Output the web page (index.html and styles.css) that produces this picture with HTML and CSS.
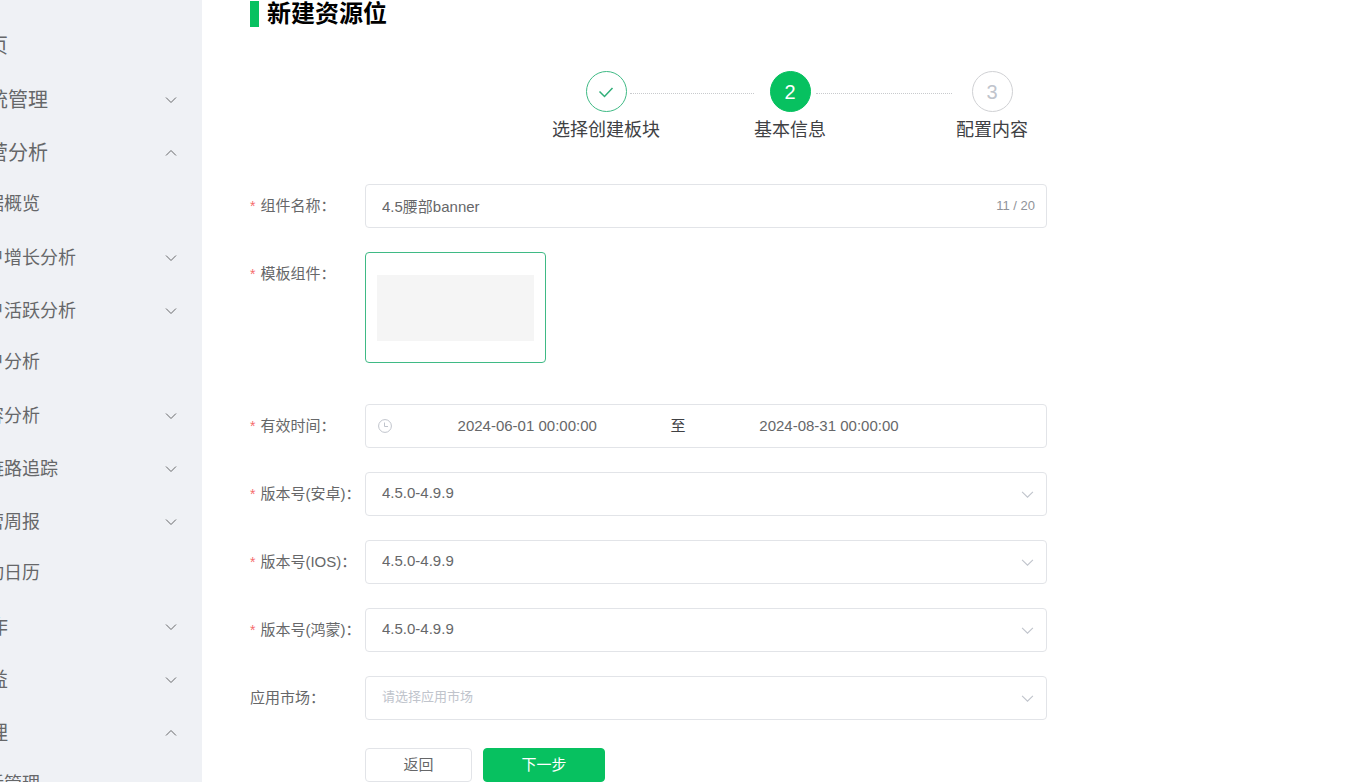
FILE: index.html
```html
<!DOCTYPE html>
<html lang="zh-CN">
<head>
<meta charset="utf-8">
<title>新建资源位</title>
<link rel="stylesheet" href="styles.css">
</head>
<body>
<svg class="sprite" aria-hidden="true">
  <symbol id="down" viewBox="0 0 12 12"><path d="M1 3.5 6 8.5 11 3.5" fill="none" stroke="currentColor"/></symbol>
  <symbol id="up" viewBox="0 0 12 12"><path d="M1 8.5 6 3.5 11 8.5" fill="none" stroke="currentColor"/></symbol>
</svg>
<div class="app">
  <aside class="sidebar">
    <nav class="menu">
      <a class="item leaf" href="#">首页</a>
      <button class="item" type="button">系统管理<svg class="arrow"><use href="#down"/></svg></button>
      <button class="item" type="button">运营分析<svg class="arrow"><use href="#up"/></svg></button>
      <a class="item sub leaf" href="#">数据概览</a>
      <button class="item sub" type="button">用户增长分析<svg class="arrow"><use href="#down"/></svg></button>
      <button class="item sub" type="button">用户活跃分析<svg class="arrow"><use href="#down"/></svg></button>
      <a class="item sub leaf" href="#">用户分析</a>
      <button class="item sub" type="button">内容分析<svg class="arrow"><use href="#down"/></svg></button>
      <button class="item sub" type="button">全链路追踪<svg class="arrow"><use href="#down"/></svg></button>
      <button class="item sub" type="button">运营周报<svg class="arrow"><use href="#down"/></svg></button>
      <a class="item sub leaf" href="#">活动日历</a>
      <button class="item" type="button">工作<svg class="arrow"><use href="#down"/></svg></button>
      <button class="item" type="button">权益<svg class="arrow"><use href="#down"/></svg></button>
      <button class="item" type="button">管理<svg class="arrow"><use href="#up"/></svg></button>
      <a class="item sub leaf" href="#">生活管理</a>
    </nav>
  </aside>
  <main class="content">
    <h1 class="title">新建资源位</h1>
    <ol class="steps">
      <li class="step">
        <div class="step-body">
          <span class="circle done"><svg class="check" viewBox="0 0 16 16"><path d="M1.500 7.500 6.500 12.500 14.500 4" fill="none" stroke="currentColor" stroke-width="1.500"/></svg></span>
          <span class="step-name">选择创建板块</span>
        </div>
        <span class="line line-long"></span>
      </li>
      <li class="step">
        <div class="step-body">
          <span class="circle active">2</span>
          <span class="step-name">基本信息</span>
        </div>
        <span class="line"></span>
      </li>
      <li class="step">
        <div class="step-body">
          <span class="circle">3</span>
          <span class="step-name">配置内容</span>
        </div>
      </li>
    </ol>
    <form class="form">
      <div class="row">
        <label class="label required" for="name">组件名称：</label>
        <div class="box">
          <input class="field" id="name" type="text" value="4.5腰部banner">
          <span class="count">11 / 20</span>
        </div>
      </div>
      <div class="row row-template">
        <span class="label required" id="tpl">模板组件：</span>
        <button class="template" type="button" aria-labelledby="tpl"><span class="preview"></span></button>
      </div>
      <div class="row">
        <label class="label required" for="start">有效时间：</label>
        <div class="box range">
          <svg class="clock" viewBox="0 0 14 14"><g fill="none" stroke="currentColor"><circle cx="7" cy="7" r="6.400"/><path d="M6.500 3.500V7.500H10"/></g></svg>
          <input class="date" id="start" type="text" value="2024-06-01 00:00:00">
          <span class="to">至</span>
          <input class="date" type="text" aria-label="结束时间" value="2024-08-31 00:00:00">
        </div>
      </div>
      <div class="row">
        <label class="label required" for="android">版本号(安卓)：</label>
        <div class="box">
          <select class="field" id="android"><option>4.5.0-4.9.9</option></select>
          <svg class="caret"><use href="#down"/></svg>
        </div>
      </div>
      <div class="row">
        <label class="label required" for="ios">版本号(IOS)：</label>
        <div class="box">
          <select class="field" id="ios"><option>4.5.0-4.9.9</option></select>
          <svg class="caret"><use href="#down"/></svg>
        </div>
      </div>
      <div class="row">
        <label class="label required" for="harmony">版本号(鸿蒙)：</label>
        <div class="box">
          <select class="field" id="harmony"><option>4.5.0-4.9.9</option></select>
          <svg class="caret"><use href="#down"/></svg>
        </div>
      </div>
      <div class="row">
        <label class="label" for="market">应用市场：</label>
        <div class="box">
          <select class="field empty" id="market"><option>请选择应用市场</option></select>
          <svg class="caret"><use href="#down"/></svg>
        </div>
      </div>
      <div class="actions">
        <button class="btn" type="button">返回</button>
        <button class="btn primary" type="button">下一步</button>
      </div>
    </form>
  </main>
</div>
</body>
</html>
```
FILE: styles.css
```css
* { box-sizing: border-box; }
body {
  margin: 0;
  background: #fff;
  color: #666769;
  font: 15px/20px "Liberation Sans", "Noto Sans CJK SC", sans-serif;
}
button, input, select { font: inherit; color: inherit; }
.sprite { display: none; }
.app { display: flex; height: 100vh; overflow: hidden; }

.sidebar { flex: 0 0 202px; overflow: hidden; background: #eff1f5; }
.menu { display: flex; flex-direction: column; margin-left: -32px; padding-top: 21px; }
.item {
  display: flex;
  flex: none;
  align-items: center;
  justify-content: space-between;
  height: 53px;
  padding: 0 25px 0 0;
  border: 0;
  background: none;
  color: #666769;
  font-size: 20px;
  text-align: left;
  text-decoration: none;
  cursor: pointer;
}
.sub { font-size: 18px; }
.leaf { height: 52px; padding-bottom: 2px; }
.arrow { width: 12px; height: 12px; }

.content { flex: 1; min-width: 0; padding: 1px 36px 0 48px; }
.title {
  margin: 0;
  padding-left: 8px;
  border-left: 9px solid #07c160;
  color: #000;
  font-size: 24px;
  line-height: 26px;
}

.steps {
  display: grid;
  grid-template-columns: 202px 202px 72px;
  justify-content: center;
  margin: 44px 0 0;
  padding: 0;
  list-style: none;
}
.step { display: flex; }
.step-body { display: flex; flex-direction: column; align-items: center; gap: 6px; }
.step-name { color: #404144; font-size: 18px; line-height: 24px; white-space: nowrap; }
.circle {
  display: flex;
  align-items: center;
  justify-content: center;
  width: 41px;
  height: 41px;
  border: 1px solid #d0d1d4;
  border-radius: 50%;
  color: #c0c4cc;
  font-size: 20px;
}
.done { border-color: #3fba85; color: #2fae78; }
.active { border-color: #07c160; background: #07c160; color: #fff; }
.check { width: 16px; height: 16px; }
.line {
  flex: 1;
  height: 1px;
  margin: 22px 4px 0 -10px;
  border-top: 1px dotted #c8cacd;
}
.line-long { margin-left: -30px; margin-right: 0; }

.form { display: flex; flex-direction: column; gap: 24px; max-width: 797px; margin-top: 42px; }
.row { display: grid; grid-template-columns: 115px 1fr; align-items: start; }
.row-template { min-height: 128px; }
.label { line-height: 44px; white-space: nowrap; }
.required::before { content: "*"; margin-right: 5px; color: #f56c6c; font-size: 14px; }
.box {
  display: flex;
  position: relative;
  align-items: center;
  height: 44px;
  border: 1px solid #e2e4e8;
  border-radius: 4px;
}
.field {
  flex: 1;
  min-width: 0;
  height: 42px;
  padding: 0 16px 2px;
  border: 0;
  outline: 0;
  background: none;
  appearance: none;
}
.empty { color: #c0c4cc; font-size: 13px; }
.count { padding-right: 11px; color: #909399; font-size: 13px; }
.caret {
  position: absolute;
  right: 12px;
  width: 13px;
  height: 13px;
  color: #c0c4cc;
  pointer-events: none;
}
.template {
  width: 181px;
  height: 111px;
  padding: 11px;
  border: 1px solid #3fba85;
  border-radius: 4px;
  background: #fff;
}
.preview { display: block; height: 66px; background: #f5f5f5; }
.range { padding: 0 12px; }
.clock { flex: none; width: 14px; height: 14px; margin-right: 4px; color: #c0c4cc; }
.date {
  flex: 0 0 40%;
  min-width: 0;
  height: 42px;
  padding: 0 0 2px;
  border: 0;
  outline: 0;
  background: none;
  text-align: center;
}
.to { flex: 0 0 6%; color: #404144; text-align: center; }
.actions { display: flex; gap: 11px; margin: 4px 0 0 115px; }
.btn {
  width: 107px;
  height: 34px;
  padding: 0;
  border: 1px solid #e2e4e8;
  border-radius: 4px;
  background: #fff;
  cursor: pointer;
}
.primary { width: 122px; border-color: #07c160; background: #07c160; color: #fff; }
```
